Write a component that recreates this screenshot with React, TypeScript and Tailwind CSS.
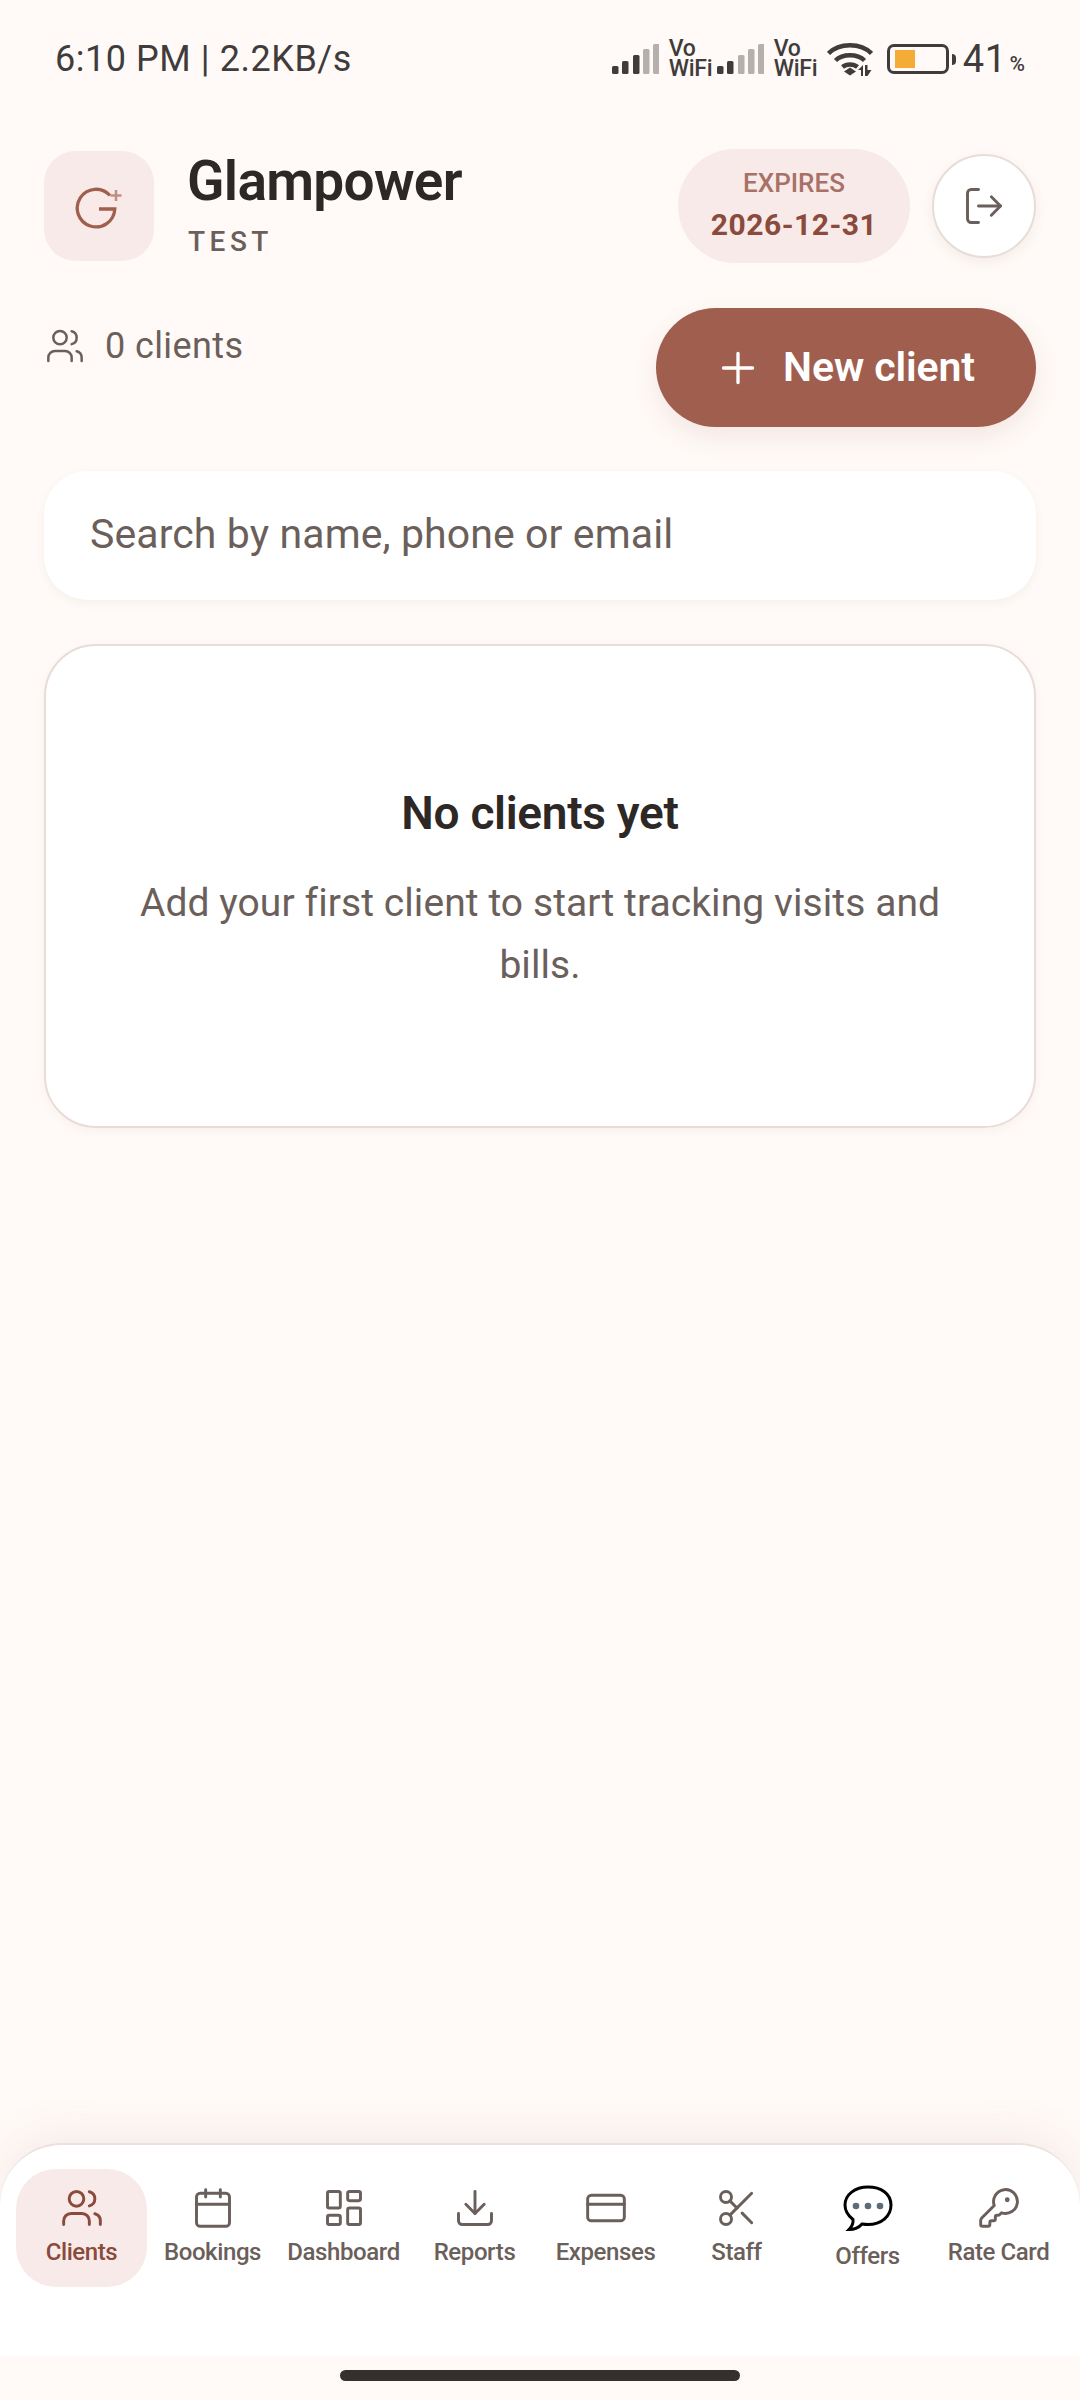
import {
  Calendar,
  CreditCard,
  Download,
  KeyRound,
  LayoutDashboard,
  LogOut,
  Plus,
  Scissors,
  Users,
} from "lucide-react";

const SignalBars = ({ active }: { active: number }) => (
  <svg width="47" height="32" viewBox="0 0 47 32">
    {[
      [0, 23, 8],
      [10, 18, 13],
      [21, 12, 19],
      [31, 6, 25],
      [41, 1, 30],
    ].map(([x, y, h], i) => (
      <rect
        key={i}
        x={x}
        y={y}
        width="6.500"
        height={h}
        rx="1.500"
        fill={i < active ? "#3f3c3b" : "#b5b0ac"}
      />
    ))}
  </svg>
);

const VoWifi = () => (
  <div className="w-[42px] text-[23px] leading-[20px] font-medium tracking-[-0.3px] text-[#3f3c3b]">
    Vo WiFi
  </div>
);

const WifiIcon = () => (
  <svg width="46" height="36" viewBox="0 0 46 36" fill="none" stroke="#3f3c3b">
    <path d="M1.500 12.500C12 1.500 34 1.500 44.500 12.500" strokeWidth="4.500" />
    <path d="M8.500 19.500C15.500 12.500 30.500 12.500 37.500 19.500" strokeWidth="4.500" />
    <path d="M15.500 26C19.500 22.500 26.500 22.500 30.500 26" strokeWidth="4.500" />
    <path d="M17 30.500l6-4 6 4-6 4z" fill="#3f3c3b" stroke="none" />
    <path d="M31 29l5-5v11h-2v-6z" fill="#3f3c3b" stroke="none" />
    <path d="M38 24h2.500v5h4l-4 6h-2.500z" fill="#3f3c3b" stroke="none" />
  </svg>
);

const StatusBar = () => (
  <div className="flex h-[118px] items-center justify-between pr-[55px] pl-[55px] text-[#3f3c3b]">
    <span className="text-[36px] tracking-[0.55px]">6:10 PM | 2.2KB/s</span>
    <div className="flex items-center">
      <SignalBars active={3} />
      <div className="ml-[10px]">
        <VoWifi />
      </div>
      <div className="ml-[6px]">
        <SignalBars active={2} />
      </div>
      <div className="ml-[10px]">
        <VoWifi />
      </div>
      <div className="ml-[11px]">
        <WifiIcon />
      </div>
      <div className="ml-[14px] flex items-center">
        <div className="flex h-[30px] w-[62px] items-center rounded-[7px] border-[3px] border-[#3f3c3b] px-[5px]">
          <div className="h-[18px] w-[20px] bg-[#f5ac36]" />
        </div>
        <div className="ml-[3px] h-[11px] w-[4px] rounded-r-sm bg-[#3f3c3b]" />
      </div>
      <span className="ml-[7px] text-[38px] leading-none tracking-[0.5px]">
        41
      </span>
      <span className="mt-[10px] ml-[3px] text-[21px] leading-none font-medium">
        %
      </span>
    </div>
  </div>
);

const Logo = () => (
  <div className="flex h-[110px] w-[110px] items-center justify-center rounded-[32px] bg-[#f8eae8]">
    <svg width="50" height="50" viewBox="-1 -1 50 50" fill="none">
      <path
        d="M35 13.500A18.800 18.800 0 1 0 39.800 27H24"
        stroke="#a05e4f"
        strokeWidth="3.300"
      />
      <path d="M41 8v11M35.500 13.500h11" stroke="#c08e82" strokeWidth="2.500" />
    </svg>
  </div>
);

const Header = () => (
  <div className="flex h-[114px] items-center">
    <Logo />
    <div className="ml-[33px] flex flex-col pb-[5px]">
      <span className="text-[55px] leading-[64px] font-semibold tracking-[-0.7px] text-[#2d2826]">
        Glampower
      </span>
      <span className="mt-[12px] ml-px text-[28px] leading-[34px] font-medium tracking-[4.5px] text-[#6b5f5b]">
        TEST
      </span>
    </div>
    <div className="ml-auto flex h-[114px] w-[232px] flex-col items-center justify-center rounded-full bg-[#f8eae8] pb-[3px]">
      <span className="text-[26px] leading-[32px] font-medium text-[#a87167]">
        EXPIRES
      </span>
      <span className="mt-[8px] text-[30px] leading-[36px] font-bold tracking-[0.5px] text-[#8a4a3c]">
        2026-12-31
      </span>
    </div>
    <div className="ml-[22px] flex h-[104px] w-[104px] items-center justify-center rounded-full border-2 border-[#e8dcd9] bg-white shadow-[0_4px_12px_rgba(120,80,70,0.08)]">
      <LogOut size={44} strokeWidth={1.6} color="#6b5f5b" />
    </div>
  </div>
);

const NAV_ICON_CLASS = "h-[44px] w-[44px]";

const OffersIcon = () => (
  <svg width="52" height="48" viewBox="0 0 52 48" fill="none">
    <path
      d="M26 3C13 3 3 10.500 3 21c0 6.500 3.500 11 8 14.500 .5 3.500-1 7-4 10 5.500 0 10-2 13-5.500 2 .3 4 .5 6 .5 13 0 23-8 23-19.500S39 3 26 3z"
      stroke="#000"
      strokeWidth="3"
    />
    <circle cx="14" cy="22" r="3.300" fill="#5b6b78" />
    <circle cx="26" cy="22" r="3.300" fill="#5b6b78" />
    <circle cx="38" cy="22" r="3.300" fill="#5b6b78" />
  </svg>
);

const navItems = [
  { label: "Clients", icon: Users, active: true },
  { label: "Bookings", icon: Calendar },
  { label: "Dashboard", icon: LayoutDashboard },
  { label: "Reports", icon: Download },
  { label: "Expenses", icon: CreditCard },
  { label: "Staff", icon: Scissors },
  { label: "Offers" },
  { label: "Rate Card", icon: KeyRound },
];

const BottomNav = () => (
  <nav className="grid h-[213px] grid-cols-8 items-start rounded-t-[62px] border-t-2 border-[#ecdfdc] bg-white px-[16px] pt-[24px] shadow-[0_-8px_44px_rgba(160,94,79,0.1)]">
    {navItems.map((item) => {
      const Icon = item.icon;
      return (
        <div
          key={item.label}
          className={
            item.active
              ? "flex h-[118px] flex-col items-center rounded-[40px] bg-[#f8eae8] pt-[17px] text-[#8a4a3c]"
              : "flex h-[118px] flex-col items-center pt-[17px] text-[#6b5f5b]"
          }
        >
          {Icon ? (
            <Icon className={NAV_ICON_CLASS} strokeWidth={1.6} />
          ) : (
            <div className="mt-[-2px] mb-[2px]">
              <OffersIcon />
            </div>
          )}
          <span className="mt-[6px] text-[24px] leading-[32px] font-medium tracking-[-0.4px] whitespace-nowrap">
            {item.label}
          </span>
        </div>
      );
    })}
  </nav>
);

export default function App() {
  return (
    <div className="flex h-[2400px] w-[1080px] flex-col overflow-hidden bg-[#fffaf7] font-[Roboto,sans-serif]">
      <StatusBar />

      <main className="px-[44px] pt-[31px]">
        <Header />

        <div className="mt-[45px] flex items-start justify-between">
          <div className="mt-[17px] ml-[1px] flex items-center text-[#6b5f5b]">
            <Users size={40} strokeWidth={1.5} />
            <span className="ml-[20px] text-[36px] leading-[42px] tracking-[0.4px]">
              0 clients
            </span>
          </div>
          <button className="flex h-[119px] w-[380px] items-center justify-center rounded-full bg-[#a05e4f] pr-[4px] font-semibold text-white shadow-[0_10px_24px_rgba(160,94,79,0.12)]">
            <Plus size={50} strokeWidth={1.6} />
            <span className="ml-[20px] text-[41px] leading-none tracking-[-0.1px]">
              New client
            </span>
          </button>
        </div>

        <div className="mt-[44px] flex h-[129px] items-center rounded-[44px] bg-white pb-[2px] pl-[46px] shadow-[0_3px_10px_rgba(120,80,70,0.06)]">
          <span className="text-[41px] tracking-[0.1px] text-[#6b5f5b]">
            Search by name, phone or email
          </span>
        </div>

        <div className="mt-[44px] flex h-[484px] flex-col items-center justify-center rounded-[52px] border-2 border-[#e8dcd9] bg-white px-[90px] pt-[8px] text-center shadow-[0_3px_8px_rgba(120,80,70,0.05)]">
          <h2 className="text-[46px] leading-[56px] font-semibold tracking-[-0.3px] text-[#2d2826]">
            No clients yet
          </h2>
          <p className="mt-[31px] text-[39px] leading-[62px] tracking-[0.08px] text-[#6b5f5b]">
            Add your first client to start tracking visits and bills.
          </p>
        </div>
      </main>

      <div className="mt-auto">
        <BottomNav />
        <div className="relative flex h-[44px] justify-center bg-[#fffaf7] pt-[14px]">
          <div className="h-[11px] w-[400px] rounded-full bg-[#33302e]" />
        </div>
      </div>
    </div>
  );
}
